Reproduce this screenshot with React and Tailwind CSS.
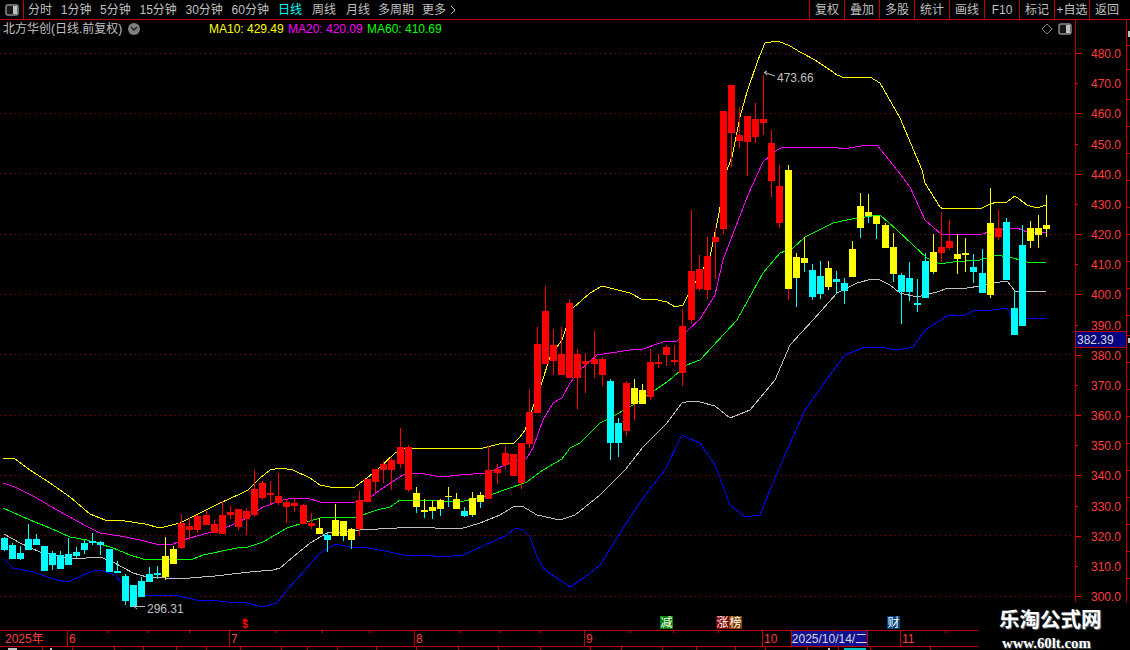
import React from 'react'

const RED = '#ff0000'
const YELLOW = '#ffff00'
const CYAN = '#00ffff'
const colorOf = { r: RED, y: YELLOW, c: CYAN }

// [colour, wick top, body top, body bottom, wick bottom, lower wick colour]
const candles = [
  ['c', 537, 538, 550, 551], ['c', 543, 545, 559, 559], ['c', 546, 553, 559, 560], ['c', 524, 539, 550, 550],
  ['c', 534, 539, 545, 545], ['c', 546, 546, 571, 571], ['c', 551, 553, 565, 570], ['c', 551, 555, 569, 569],
  ['c', 538, 554, 565, 565], ['c', 547, 552, 556, 558], ['c', 540, 543, 550, 554], ['c', 533, 541, 543, 545],
  ['c', 541, 542, 545, 555], ['c', 549, 549, 572, 572], ['c', 561, 571, 573, 573], ['c', 574, 576, 601, 605],
  ['c', 585, 585, 607, 607], ['c', 577, 581, 597, 597], ['c', 567, 574, 582, 582], ['c', 566, 573, 575, 579],
  ['y', 537, 556, 577, 580, 'y'], ['y', 546, 549, 564, 564], ['r', 514, 523, 548, 549], ['r', 518, 526, 530, 540],
  ['r', 515, 516, 530, 533], ['r', 511, 515, 525, 525], ['r', 520, 524, 533, 533], ['r', 501, 515, 534, 534],
  ['r', 506, 512, 515, 519], ['r', 509, 509, 527, 530], ['r', 508, 511, 519, 535], ['r', 470, 489, 515, 517],
  ['r', 481, 483, 498, 500], ['r', 481, 493, 495, 505], ['r', 473, 496, 503, 505], ['r', 499, 502, 507, 523],
  ['r', 498, 503, 506, 512], ['r', 504, 505, 524, 524], ['r', 513, 523, 526, 529], ['y', 518, 528, 534, 534],
  ['c', 532, 535, 540, 552], ['y', 504, 520, 536, 536], ['y', 521, 521, 536, 541, 'c'], ['y', 528, 529, 540, 549, 'c'],
  ['r', 491, 500, 529, 536], ['r', 479, 479, 502, 502], ['r', 469, 469, 482, 493], ['r', 461, 464, 470, 483],
  ['r', 458, 460, 470, 490], ['r', 428, 447, 464, 468], ['r', 445, 447, 490, 492], ['y', 487, 493, 507, 513, 'c'],
  ['y', 499, 510, 512, 518, 'c'], ['y', 500, 507, 511, 519, 'c'], ['y', 499, 500, 509, 516, 'c'], ['y', 487, 496, 497, 507, 'c'],
  ['y', 493, 499, 509, 509], ['c', 507, 511, 516, 517], ['y', 492, 498, 515, 517, 'c'], ['y', 492, 495, 502, 508, 'c'],
  ['r', 446, 470, 499, 499], ['r', 464, 469, 473, 484], ['r', 446, 453, 465, 469], ['r', 454, 454, 476, 476],
  ['r', 443, 443, 483, 489], ['r', 390, 412, 444, 448], ['r', 327, 344, 413, 413], ['r', 286, 311, 364, 364],
  ['r', 329, 345, 361, 375], ['r', 327, 354, 375, 375], ['r', 299, 303, 378, 378], ['r', 349, 354, 378, 409],
  ['r', 353, 361, 364, 393], ['r', 331, 359, 364, 378], ['r', 357, 359, 375, 386], ['c', 379, 381, 443, 460],
  ['c', 418, 423, 443, 457], ['r', 381, 383, 431, 436], ['y', 379, 388, 404, 420, 'r'], ['y', 384, 390, 404, 404],
  ['r', 349, 362, 397, 400], ['r', 354, 362, 364, 368], ['r', 345, 347, 355, 366], ['r', 345, 360, 362, 365],
  ['r', 309, 326, 373, 386], ['r', 210, 271, 320, 324], ['r', 255, 269, 289, 291], ['r', 237, 256, 290, 299],
  ['r', 227, 237, 242, 279], ['r', 111, 111, 229, 234], ['r', 85, 85, 133, 167], ['r', 107, 135, 141, 148],
  ['r', 116, 116, 142, 176], ['r', 103, 119, 137, 143], ['r', 75, 119, 123, 135], ['r', 130, 143, 181, 197],
  ['r', 165, 186, 223, 228], ['y', 165, 170, 289, 300, 'r'], ['y', 253, 257, 278, 307, 'c'], ['y', 237, 258, 263, 272, 'c'],
  ['c', 264, 270, 297, 300], ['c', 261, 276, 294, 299], ['y', 261, 268, 287, 290, 'y'], ['c', 271, 279, 282, 294],
  ['c', 278, 283, 291, 304], ['y', 241, 249, 277, 277], ['y', 193, 206, 228, 238, 'c'], ['y', 194, 212, 216, 223, 'c'],
  ['y', 216, 216, 224, 239, 'c'], ['y', 223, 225, 248, 248], ['y', 233, 247, 274, 282, 'c'], ['c', 273, 275, 292, 324],
  ['c', 262, 278, 292, 301], ['c', 279, 303, 305, 312], ['c', 253, 261, 298, 298], ['y', 234, 252, 272, 274, 'c'],
  ['r', 212, 247, 253, 262], ['r', 220, 241, 248, 250], ['y', 234, 254, 259, 274, 'y'], ['y', 238, 253, 255, 272, 'y'],
  ['c', 254, 267, 272, 283], ['c', 249, 273, 293, 293], ['y', 188, 223, 295, 298, 'y'], ['r', 210, 228, 237, 240],
  ['c', 218, 222, 280, 280], ['c', 291, 308, 335, 335], ['c', 225, 245, 326, 326], ['y', 221, 228, 241, 248, 'y'],
  ['y', 215, 228, 235, 248, 'y'], ['y', 195, 225, 229, 237, 'y'],
]

const lines = [
  {
    color: '#0000ff',
    points: '4,559 13,568 33,572 57,580 68,582 90,572 100,570 115,575 122,583 131,592 143,595 175,595 200,601 210,600 227,602 243,602 262,607 277,603 287,590 305,570 320,553 335,544 350,547 363,547 390,552 403,555 427,555 440,557 463,555 483,546 507,535 515,528 523,530 530,537 537,557 545,570 557,578 570,587 585,577 600,565 625,525 645,495 665,470 682,435 690,439 700,443 715,465 730,505 745,517 760,515 770,490 785,455 805,410 830,375 845,355 865,347 880,347 897,350 913,347 925,330 947,316 965,315 973,311 993,310 1007,308 1012,318 1046,318',
  },
  {
    color: '#c0c0c0',
    points: '4,534 20,543 40,552 73,559 100,557 113,562 133,573 147,577 165,578 190,578 215,576 250,572 273,570 280,568 293,557 310,543 327,533 340,532 360,530 397,528 410,527 460,529 480,523 500,515 513,507 522,506 537,515 560,520 575,515 600,495 625,470 643,447 667,423 682,403 690,401 700,402 715,406 730,418 750,410 775,380 790,345 813,320 837,293 857,283 872,279 880,280 890,285 900,293 917,297 937,292 948,288 967,288 980,286 993,283 1007,281 1015,291 1046,291',
  },
  {
    color: '#00ff00',
    points: '3,508 30,520 50,528 70,537 87,540 113,548 130,555 143,559 180,559 193,559 203,555 237,548 248,547 263,542 287,528 303,523 320,518 337,517 357,517 377,510 390,507 400,500 423,500 460,502 490,495 527,482 543,470 562,459 570,448 580,443 600,423 610,418 633,405 667,382 687,365 700,360 737,320 763,273 780,253 793,248 805,237 833,223 847,220 857,218 880,215 897,230 913,245 927,258 940,264 953,262 980,260 997,255 1013,258 1027,262 1046,262',
  },
  {
    color: '#ff00ff',
    points: '3,483 15,487 35,497 50,506 75,520 90,528 100,533 120,536 140,540 160,545 173,544 183,540 197,536 223,529 247,518 263,507 283,500 293,498 307,498 320,502 355,502 367,500 380,490 395,480 403,475 420,473 440,477 460,475 487,473 512,462 527,458 533,448 543,420 553,403 562,398 570,383 580,370 597,355 610,353 630,350 643,349 663,342 677,341 688,330 700,319 715,295 723,260 748,195 763,162 777,150 783,147 833,147 843,149 867,145 877,145 897,170 910,187 925,220 933,227 942,235 983,234 993,230 1017,228 1027,232 1046,233',
  },
  {
    color: '#ffff00',
    points: '3,458 15,459 30,470 50,483 70,497 90,514 105,520 125,521 145,524 160,528 180,523 200,513 220,503 240,494 248,490 260,478 270,470 280,468 293,470 310,478 320,485 335,488 355,487 363,481 377,470 395,453 405,448 430,449 450,448 473,449 483,448 503,443 513,444 520,437 525,430 542,382 550,357 562,340 573,308 590,293 602,286 610,288 630,293 643,300 653,299 667,302 675,307 683,305 687,297 710,257 719,213 727,170 732,157 740,117 747,92 758,60 765,43 778,41 790,46 800,52 815,60 830,70 837,75 845,78 870,77 880,83 900,118 922,170 925,183 940,207 943,209 960,208 982,208 990,204 997,202 1007,202 1015,196 1027,205 1037,208 1046,205',
  },
]

const gridRows = [53, 113, 173, 234, 294, 354, 415, 475, 535, 596]

const priceLabels = [480, 470, 460, 450, 440, 430, 420, 410, 400, 390, 380, 370, 360, 350, 340, 330, 320, 310, 300].map(
  (price, i) => ({ price, y: Math.round(53 + i * 30.17) })
)

const leftTabs = ['1分钟', '5分钟', '15分钟', '30分钟', '60分钟']
const rightTabs = ['复权', '叠加', '多股', '统计', '画线', 'F10', '标记', '+自选', '返回']
const lastRowCells = [43, 30, 42, 29, 33, 30, 34, 41, 26, 30, 39, 40, 42, 40, 42, 50, 31, 41, 34, 39, 30, 42, 31, 32, 60]
const ticks = [108, 148, 189, 276, 322, 369, 460, 500, 540, 630, 673, 718, 833, 945]
const stripTicks = [45, 69, 99, 126, 153, 180, 207, 234, 261, 288, 315, 335, 362, 389, 416, 443, 470, 497, 524, 551, 578]

const PanelIcon = () => (
  <svg width="14" height="12" viewBox="0 0 14 12">
    <rect x="1" y="1" width="12" height="10" rx="2" fill="#181818" stroke="#8c8c8c" strokeWidth="1.5" />
    <rect x="8" y="2" width="4" height="8" fill="#c0c0c0" />
  </svg>
)

const Chart = () => (
  <svg width="1075" height="610" viewBox="0 20 1075 610" className="block">
    {gridRows.map((y) => (
      <line key={y} x1="0" x2="1075" y1={y + 0.5} y2={y + 0.5} stroke="#900000" strokeDasharray="1 4" />
    ))}
    {lines.map((line) => (
      <polyline key={line.color} points={line.points} fill="none" stroke={line.color} shapeRendering="crispEdges" />
    ))}
    {candles.map(([color, wickTop, top, bottom, wickBottom, lower], i) => {
      const left = Math.floor(1 + i * 8.083)
      return (
        <g key={i} shapeRendering="crispEdges">
          <rect x={left + 3} y={wickTop} width="1" height={top - wickTop} fill={colorOf[color]} />
          <rect x={left + 3} y={bottom} width="1" height={wickBottom - bottom} fill={colorOf[lower || color]} />
          <rect x={left} y={top} width="7" height={bottom - top} fill={colorOf[color]} />
        </g>
      )
    })}

    {/* high / low markers */}
    <g stroke="#c0c0c0" fill="none">
      <path d="M775 76 L765 72.5 M767 71 L764 72.5 L767 75" />
      <path d="M145 606.5 L134 606.5 M137 604 L134 606.5 L137 609" />
    </g>
    <text x="777" y="82" fill="#c0c0c0" fontSize="12">473.66</text>
    <text x="147" y="613" fill="#c0c0c0" fontSize="12">296.31</text>

    {/* dollar event */}
    <path d="M245 618 L248 621 L242 621 Z" fill="#ff0000" />
    <text x="245" y="627.5" fill="#ff0000" fontSize="10" fontWeight="700" textAnchor="middle">$</text>
  </svg>
)

const PriceAxis = () => (
  <svg width="50" height="610" viewBox="1076 20 50 610" className="block">
    {priceLabels.map(({ price, y }, i) => (
      <g key={price}>
        <rect x="1076" y={y} width={i % 2 === 0 ? 5 : 2} height="1" fill="#ff0000" />
        <text x="1091" y={y + 5} fill="#ff3c3c" fontSize="12">{price}.0</text>
      </g>
    ))}
  </svg>
)

const EventTag = ({ className, children }) => (
  <span className={`flex h-[13px] w-[13px] items-center justify-center text-[12px] leading-none text-white ${className}`}>
    {children}
  </span>
)

export default function App() {
  return (
    <div className="relative flex h-[650px] w-[1130px] flex-col overflow-hidden bg-black font-['Liberation_Sans','Noto_Sans_CJK_SC',sans-serif] text-[12px] text-[#c0c0c0]">
      {/* Toolbar */}
      <header className="flex h-5 shrink-0 items-center border-b border-[#c00000] leading-none">
        <div className="flex h-full w-6 items-center justify-center border-r border-[#c00000]">
          <PanelIcon />
        </div>
        <nav className="ml-1 flex items-center gap-[8.7px]">
          <span>分时</span>
          {leftTabs.map((tab) => (
            <span key={tab}>{tab}</span>
          ))}
        </nav>
        <nav className="ml-[9px] flex items-center gap-[10px]">
          <span className="text-[#00ffff]">日线</span>
          <span>周线</span>
          <span>月线</span>
          <span className="-ml-[2px]">多周期</span>
          <span className="-ml-[2px] flex items-center gap-1">
            更多
            <svg width="6" height="10" viewBox="0 0 6 10" fill="none" stroke="#c0c0c0">
              <path d="M1 1l4 4-4 4" />
            </svg>
          </span>
        </nav>
        <nav className="ml-auto mr-[6px] flex h-full">
          {rightTabs.map((tab) => (
            <span key={tab} className="flex w-[35px] items-center justify-center whitespace-nowrap border-l border-[#c00000]">
              {tab}
            </span>
          ))}
        </nav>
      </header>

      {/* Chart + price axis */}
      <main className="relative flex h-[610px] shrink-0">
        <div className="w-[1075px] shrink-0">
          <Chart />
        </div>
        <div className="relative w-[51px] shrink-0 border-l border-[#c00000]">
          <PriceAxis />
          <div className="absolute left-0 top-[311px] flex h-[17px] w-[50px] items-center border-y border-[#c00000] bg-[#000080] pl-px text-[#d8d8d8]">
            382.39
          </div>
        </div>
        <div className="relative flex-1 border-l border-[#c00000]">
          {stripTicks.map((y) => (
            <i key={y} className="absolute left-0 h-px w-[3px] bg-[#c00000]" style={{ top: y - 20 }} />
          ))}
          <i className="absolute left-px top-[11px] h-[6px] w-[2px] bg-[#c0c0c0]" />
          <i className="absolute left-px top-[318px] h-[5px] w-[2px] bg-[#c0c0c0]" />
        </div>

        {/* Stock title and MA values */}
        <div className="absolute left-[3px] top-0 flex h-[18px] items-center leading-none">
          <span className="w-[125px]">北方华创(日线.前复权)</span>
          <span className="flex h-3 w-3 items-center justify-center rounded-full bg-[#808080]">
            <svg width="8" height="6" viewBox="0 0 8 6" fill="none" stroke="#222" strokeWidth="1.5">
              <path d="M1 1l3 3 3-3" />
            </svg>
          </span>
          <span className="ml-[69px] w-[79px] text-[#ffff00]">MA10: 429.49</span>
          <span className="w-[79px] text-[#ff00ff]">MA20: 420.09</span>
          <span className="text-[#00ff00]">MA60: 410.69</span>
        </div>
        <div className="absolute left-[1041px] top-[3px] flex items-center gap-[5px]">
          <svg width="12" height="12" viewBox="0 0 12 12" fill="none" stroke="#808080">
            <path d="M6 1l5 5-5 5-5-5z" />
          </svg>
          <PanelIcon />
        </div>

        {/* Event tags above the date axis */}
        <div className="absolute left-[660px] top-[596px] flex">
          <EventTag className="bg-[#008000]">减</EventTag>
          <EventTag className="ml-[43px] bg-[#800000]">涨</EventTag>
          <EventTag className="bg-[#804000]">榜</EventTag>
          <EventTag className="ml-[145px] bg-[#004080]">财</EventTag>
        </div>
      </main>

      {/* Date axis */}
      <div className="relative flex h-[17px] w-[978px] shrink-0 border-y border-[#c00000] leading-none text-[#ff3c3c]">
        <span className="flex w-[67px] items-center pl-[5px]">2025年</span>
        <span className="flex w-[162px] items-center border-l border-[#c00000] pl-[1px]">6</span>
        <span className="flex w-[185px] items-center border-l border-[#c00000] pl-[1px]">7</span>
        <span className="flex w-[170px] items-center border-l border-[#c00000] pl-[1px]">8</span>
        <span className="flex w-[178px] items-center border-l border-[#c00000] pl-[1px]">9</span>
        <span className="flex w-[29px] items-center border-l border-[#c00000] pl-[1px]">10</span>
        <span className="flex w-[77px] items-center justify-center whitespace-nowrap border-x border-[#c00000] bg-[#101090] text-[#d8d8d8]">2025/10/14/二</span>
        <span className="w-[32px]" />
        <span className="flex items-center border-l border-[#c00000] pl-[1px]">11</span>
        {ticks.map((x) => (
          <i key={x} className="absolute top-0 h-[2px] w-px bg-[#c00000]" style={{ left: x }} />
        ))}
      </div>

      {/* Clipped row below the axis */}
      <div className="relative flex h-[3px] w-[978px] shrink-0 overflow-hidden">
        {lastRowCells.map((width, i) => (
          <i key={i} className="h-full shrink-0 border-r border-[#c00000]" style={{ width }} />
        ))}
        <i className="absolute left-[8px] top-px h-[2px] w-[9px] bg-[#c0c0c0]" />
        <i className="absolute left-[50px] top-px h-[2px] w-[2px] bg-[#c0c0c0]" />
        <i className="absolute left-[828px] top-px h-[2px] w-[2px] bg-[#c0c0c0]" />
        <i className="absolute left-[844px] top-px h-[2px] w-[22px] bg-[#00c0c0]" />
      </div>

      {/* Site watermark */}
      <div className="absolute bottom-0 right-0 flex h-[48px] w-[152px] flex-col items-start bg-black pl-[21px] pt-[8px] leading-none text-white">
        <span className="text-[20.5px] font-bold [text-shadow:1px_1px_1px_#777]">乐淘公式网</span>
        <span className="ml-[3px] mt-[5px] font-['Liberation_Serif',serif] text-[14.8px] font-bold [text-shadow:1px_1px_1px_#555]">www.60lt.com</span>
      </div>
    </div>
  )
}
